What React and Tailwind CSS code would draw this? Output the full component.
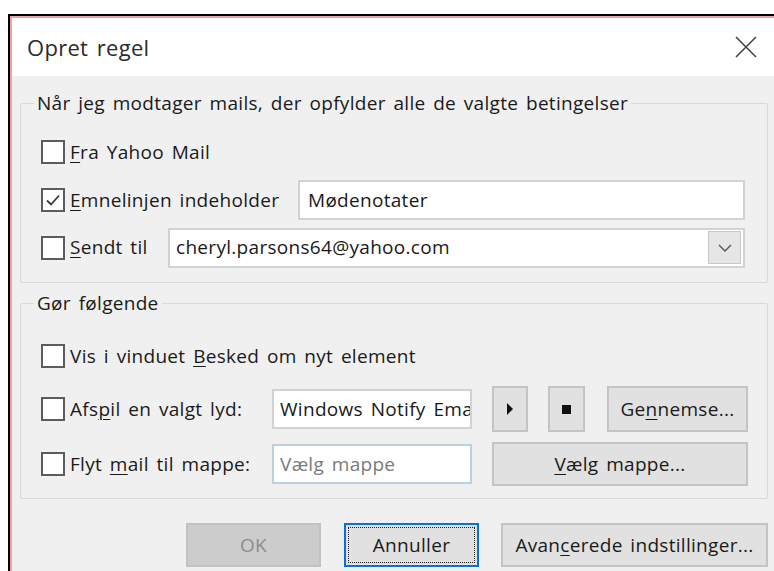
import React from "react";

const font = { fontFamily: '"Open Sans", "Noto Sans", Arial, sans-serif' };

function Box({ checked }) {
  return (
    <div className="w-[24px] h-[24px] shrink-0 border-2 border-[#5c5c5c] bg-white flex items-center justify-center">
      {checked && (
        <svg width="16" height="14" viewBox="0 0 16 14" fill="none">
          <path d="M2 7.5 L6 11.5 L14 2.5" stroke="#3a3a3a" strokeWidth="1.8" />
        </svg>
      )}
    </div>
  );
}

function U({ children }) {
  return <span className="underline underline-offset-[3px] decoration-1">{children}</span>;
}

function Btn({ className = "", children }) {
  return (
    <div
      className={
        "h-full flex items-center justify-center bg-[#e1e1e1] border-2 border-[#c4c4c4] text-[#1a1a1a] " +
        className
      }
    >
      {children}
    </div>
  );
}

export default function App() {
  return (
    <div
      className="w-[774px] h-[571px] bg-white overflow-hidden pt-[14px] pl-[8px] text-[19px] text-[#1a1a1a] tracking-[0.3px] [word-spacing:2.5px]"
      style={font}
    >
      <div className="w-[800px] h-[600px] border-t-2 border-l-2 border-black">
        <div className="w-full h-full border-t-2 border-l-2 border-[#eba4aa] bg-[#f0f0f0]">
          {/* title bar */}
          <div className="h-[58px] w-[762px] bg-white flex items-center justify-between pl-[15px] pr-[17px]">
            <span className="text-[22px] text-[#2b2b2b]">Opret regel</span>
            <svg width="22" height="22" viewBox="0 0 22 22">
              <path d="M1 1 L21 21 M21 1 L1 21" stroke="#444" strokeWidth="1.6" />
            </svg>
          </div>

          {/* conditions */}
          <fieldset className="ml-[8px] mt-[15px] w-[748px] border border-[#d9d9d9] rounded-[2px]">
            <legend className="ml-[13px] px-[3px] leading-[24px]">
              Når jeg modtager mails, der opfylder alle de valgte betingelser
            </legend>
            <div className="pt-[13px] pb-[11px] pl-[20px]">
              <div className="h-[48px] flex items-center gap-[5px]">
                <Box />
                <span><U>F</U>ra Yahoo Mail</span>
              </div>
              <div className="h-[48px] flex items-center">
                <Box checked />
                <span className="ml-[5px] w-[228px]"><U>E</U>mnelinjen indeholder</span>
                <div className="w-[447px] h-[40px] bg-white border-2 border-[#d2d2d2] flex items-center pl-[8px]">
                  Mødenotater
                </div>
              </div>
              <div className="h-[47px] flex items-center">
                <Box />
                <span className="ml-[5px] w-[98px]"><U>S</U>endt til</span>
                <div className="w-[577px] h-[40px] bg-white border-2 border-[#d2d2d2] flex items-center pl-[6px] pr-[2px]">
                  <span className="flex-1">cheryl.parsons64@yahoo.com</span>
                  <div className="w-[33px] h-[33px] bg-[#e6e6e6] border border-[#c8c8c8] flex items-center justify-center">
                    <svg width="14" height="8" viewBox="0 0 14 8" fill="none">
                      <path d="M1 1 L7 7 L13 1" stroke="#555" strokeWidth="1.4" />
                    </svg>
                  </div>
                </div>
              </div>
            </div>
          </fieldset>

          {/* actions */}
          <fieldset className="ml-[8px] mt-[8px] w-[748px] border border-[#d9d9d9] rounded-[2px]">
            <legend className="ml-[13px] px-[3px] leading-[24px]">Gør følgende</legend>
            <div className="pb-[12px] pl-[20px]">
              <div className="mt-[21px] h-[40px] flex items-center gap-[5px]">
                <Box />
                <span>Vis i vinduet <U>B</U>esked om nyt element</span>
              </div>
              <div className="mt-[10px] h-[46px] flex items-center">
                <Box />
                <span className="ml-[5px] w-[202px]">Afs<U>p</U>il en valgt lyd:</span>
                <div className="w-[200px] h-[40px] bg-white border-2 border-[#d2d2d2] flex items-center pl-[6px] overflow-hidden whitespace-nowrap">
                  Windows Notify Email
                </div>
                <Btn className="ml-[20px] w-[36px]">
                  <svg width="8" height="12" viewBox="0 0 8 12"><path d="M1 0 L7 6 L1 12 Z" fill="#111" /></svg>
                </Btn>
                <Btn className="ml-[20px] w-[37px]">
                  <div className="w-[9px] h-[9px] bg-[#111]" />
                </Btn>
                <Btn className="ml-[22px] w-[141px]">
                  Ge<U>n</U>nemse...
                </Btn>
              </div>
              <div className="mt-[10px] h-[44px] flex items-center">
                <Box />
                <span className="ml-[5px] w-[202px]">Flyt <U>m</U>ail til mappe:</span>
                <div className="w-[200px] h-[40px] bg-white border-2 border-[#b9cfe6] flex items-center pl-[6px] text-[#7a7a7a]">
                  Vælg mappe
                </div>
                <Btn className="ml-[20px] w-[256px]">
                  <U>V</U>ælg mappe...
                </Btn>
              </div>
            </div>
          </fieldset>

          {/* dialog buttons */}
          <div className="ml-[8px] w-[748px] mt-[24px] h-[44px] flex justify-end">
            <div className="w-[135px] h-full bg-[#cccccc] border-2 border-[#c2c2c2] flex items-center justify-center text-[#8c8c8c]">
              OK
            </div>
            <div className="ml-[23px] w-[135px] h-full bg-[#e1e1e1] border-2 border-[#0a6fd6] p-[2px]">
              <div className="w-full h-full border border-dotted border-[#222] flex items-center justify-center">
                Annuller
              </div>
            </div>
            <Btn className="ml-[22px] w-[267px]">
              Avan<U>c</U>erede indstillinger...
            </Btn>
          </div>
        </div>
      </div>
    </div>
  );
}
